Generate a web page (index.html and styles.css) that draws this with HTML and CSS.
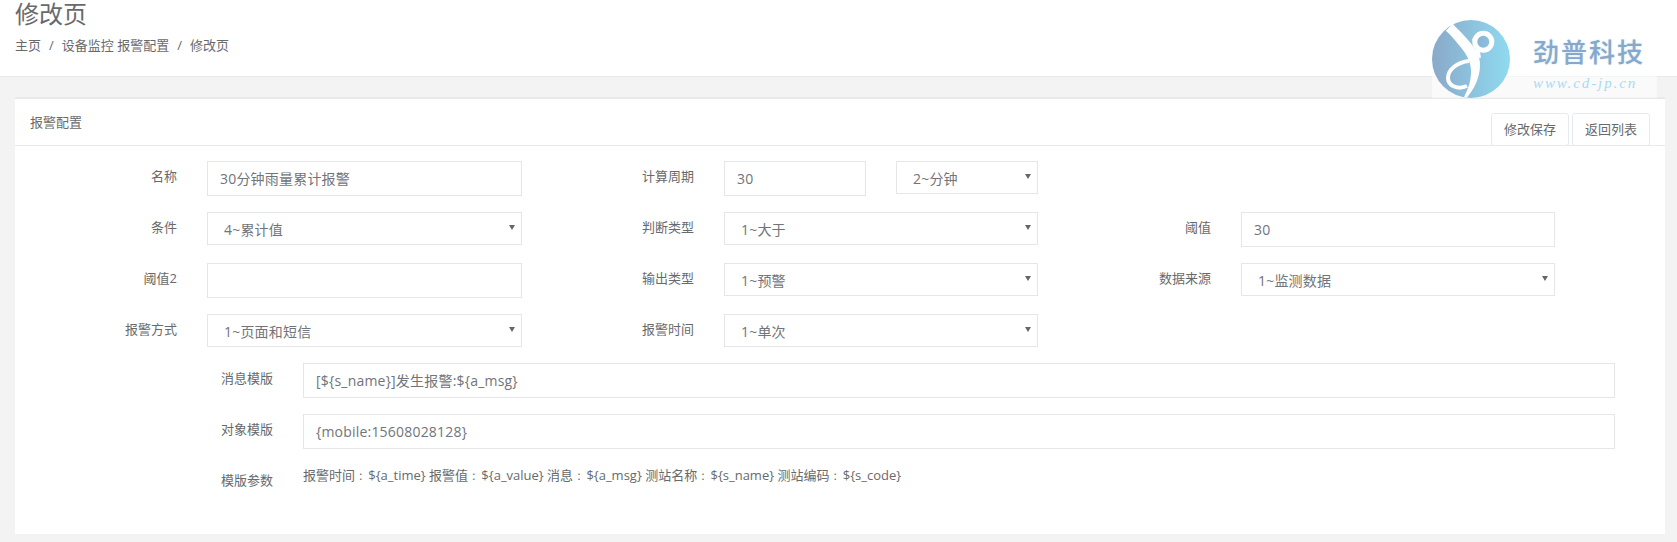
FILE: index.html
```html
<!DOCTYPE html>
<html lang="zh-CN">
<head>
<meta charset="utf-8">
<title>修改页</title>
<link rel="stylesheet" href="styles.css">
</head>
<body>
<header class="page-head">
  <h2 class="page-title">修改页</h2>
  <nav class="crumbs"><span>主页</span><span class="sep">/</span><span>设备监控 报警配置</span><span class="sep">/</span><span>修改页</span></nav>
  <div class="logo">
    <svg class="logo-mark" viewBox="0 0 78 78" width="78" height="78">
      <defs>
        <linearGradient id="lg" x1="0" y1="0" x2="1" y2="0">
          <stop offset="0" stop-color="#8aa9c9"/>
          <stop offset="1" stop-color="#8fdaf0"/>
        </linearGradient>
        <linearGradient id="lg2" x1="0" y1="0" x2="1" y2="0">
          <stop offset="0" stop-color="#88b2d4"/>
          <stop offset="1" stop-color="#8cc4e0"/>
        </linearGradient>
      </defs>
      <circle cx="39" cy="39" r="39" fill="url(#lg)"/>
      <path d="M13.7 10.7 L20.7 4 C26 9 30 13 36 20 C44 29 48 36 48 45 C48 58 42 69 35 77.5 L32 77 C37 68 39.5 58 39 50 C38.5 40 33 32 26 24 C22 19 18 14 13.7 10.7 Z" fill="#fff"/>
      <path d="M37 41 C26 42 16 49 16 58 C16 66 26 70 35 66" fill="none" stroke="#fff" stroke-width="4"/>
      <path d="M42 18 C44 24 46 30 47 38" fill="none" stroke="#fff" stroke-width="4"/>
      <circle cx="51.3" cy="21.7" r="8.5" fill="url(#lg2)" stroke="#fff" stroke-width="5"/>
    </svg>
    <div class="logo-text">
      <div class="logo-name">劲普科技</div>
      <div class="logo-url">www.cd-jp.cn</div>
    </div>
  </div>
</header>

<main class="panel">
  <div class="panel-title">
    <span class="panel-name">报警配置</span>
    <div class="actions">
      <button class="btn" type="button">修改保存</button>
      <button class="btn" type="button">返回列表</button>
    </div>
  </div>
  <form class="panel-body">
    <div class="row">
      <div class="field"><label class="label">名称</label><div class="ctrl"><input class="input" value="30分钟雨量累计报警"></div></div>
      <div class="field"><label class="label">计算周期</label><div class="ctrl pair"><input class="input" value="30"><div class="select-box"><select class="select"><option>2~分钟</option></select></div></div></div>
    </div>
    <div class="row">
      <div class="field"><label class="label">条件</label><div class="ctrl"><div class="select-box"><select class="select"><option>4~累计值</option></select></div></div></div>
      <div class="field"><label class="label">判断类型</label><div class="ctrl"><div class="select-box"><select class="select"><option>1~大于</option></select></div></div></div>
      <div class="field"><label class="label">阈值</label><div class="ctrl"><input class="input" value="30"></div></div>
    </div>
    <div class="row">
      <div class="field"><label class="label">阈值2</label><div class="ctrl"><input class="input" value=""></div></div>
      <div class="field"><label class="label">输出类型</label><div class="ctrl"><div class="select-box"><select class="select"><option>1~预警</option></select></div></div></div>
      <div class="field"><label class="label">数据来源</label><div class="ctrl"><div class="select-box"><select class="select"><option>1~监测数据</option></select></div></div></div>
    </div>
    <div class="row row-short">
      <div class="field"><label class="label">报警方式</label><div class="ctrl"><div class="select-box"><select class="select"><option>1~页面和短信</option></select></div></div></div>
      <div class="field"><label class="label">报警时间</label><div class="ctrl"><div class="select-box"><select class="select"><option>1~单次</option></select></div></div></div>
    </div>
    <div class="wide">
      <label class="label wide-label">消息模版</label>
      <div class="ctrl wide-ctrl"><input class="input" value="[${s_name}]发生报警:${a_msg}"></div>
    </div>
    <div class="wide">
      <label class="label wide-label">对象模版</label>
      <div class="ctrl wide-ctrl"><input class="input" value="{mobile:15608028128}"></div>
    </div>
    <div class="wide">
      <label class="label wide-label">模版参数</label>
      <div class="ctrl wide-ctrl params">报警时间<span class="colon">：</span>${a_time} 报警值<span class="colon">：</span>${a_value} 消息<span class="colon">：</span>${a_msg} 测站名称<span class="colon">：</span>${s_name} 测站编码<span class="colon">：</span>${s_code}</div>
    </div>
  </form>
</main>
</body>
</html>
```

FILE: styles.css
```css
* { box-sizing: border-box; }

html, body {
  margin: 0;
  height: 542px;
  overflow: hidden;
}

body {
  background: #f3f3f4;
  color: #676a6c;
  font-family: "Open Sans", "Noto Sans CJK SC", sans-serif;
  font-size: 13px;
}

.page-head {
  position: relative;
  height: 77px;
  padding: 0 15px;
  background: #fff;
  border-bottom: 1px solid #e7eaec;
}

.page-title {
  margin: 0;
  font-size: 24px;
  font-weight: 400;
  line-height: 28px;
}

.crumbs {
  margin-top: 8px;
  display: flex;
  line-height: 18px;
}

.sep { padding: 0 8px; }

.logo {
  position: absolute;
  top: 0;
  left: 1432px;
  width: 225px;
  height: 98px;
  display: flex;
  align-items: flex-end;
  background: rgba(255, 255, 255, 0.55);
}

.logo-mark { display: block; flex: none; }

.logo-text {
  margin-left: 23px;
  padding-bottom: 7px;
}

.logo-name {
  color: #86a9cb;
  font-family: "Noto Sans CJK SC", sans-serif;
  font-size: 26px;
  font-weight: 500;
  letter-spacing: 2px;
  line-height: 34px;
  text-shadow: 0 0 2px #c6def0;
}

.logo-url {
  margin-top: 7px;
  color: #a5dcf6;
  font-family: "Liberation Serif", serif;
  font-size: 15px;
  font-style: italic;
  letter-spacing: 1.9px;
  line-height: 16px;
}

.panel {
  margin: 20px 12px 8px 15px;
  height: 437px;
  background: #fff;
  border-top: 2px solid #e7eaec;
}

.panel-title {
  display: flex;
  justify-content: space-between;
  align-items: flex-end;
  height: 47px;
  padding: 0 15px;
  border-bottom: 1px solid #e7eaec;
}

.panel-name {
  align-self: center;
  margin-bottom: 2px;
}

.actions {
  display: flex;
  gap: 3px;
  margin-bottom: -1px;
}

.btn {
  height: 33px;
  width: 78px;
  padding: 0 0 2px;
  background: #fff;
  border: 1px solid #e7eaec;
  border-radius: 3px;
  color: #676a6c;
  font: inherit;
}

.panel-body {
  padding: 15px 0 0 5px;
}

.row {
  display: flex;
  height: 51px;
}

.row-short { height: 49px; }

.field {
  display: flex;
  width: 517px;
}

.label {
  flex: none;
  width: 172px;
  padding-right: 15px;
  text-align: right;
  line-height: 31px;
}

.ctrl {
  flex: 1;
  min-width: 0;
  padding: 0 16px 0 15px;
}

.field:first-child .ctrl {
  padding-right: 15px;
}

.input,
.select {
  display: block;
  width: 100%;
  background: #fff;
  border: 1px solid #e5e6e7;
  border-radius: 0;
  color: #71747a;
  font-family: inherit;
  font-size: 14px;
  letter-spacing: 0.2px;
}

.input {
  height: 35px;
  padding: 0 12px 1px;
}

.select {
  height: 33px;
  padding: 2px 16px 0;
  appearance: none;
  -webkit-appearance: none;
}

.select-box {
  position: relative;
}

.select-box::after {
  content: "";
  position: absolute;
  top: 13px;
  right: 7px;
  border-style: solid;
  border-width: 5px 3px 0;
  border-color: #666 transparent transparent;
  pointer-events: none;
}

.pair {
  display: flex;
  justify-content: space-between;
}

.pair .input,
.pair .select-box {
  flex: none;
  width: 142px;
}

.wide {
  display: flex;
  height: 51px;
  width: 1611px;
}

.wide-label { width: 268px; }

.params {
  line-height: 20px;
}

.colon {
  padding-left: 3.3px;
  font-size: 10px;
}
```
